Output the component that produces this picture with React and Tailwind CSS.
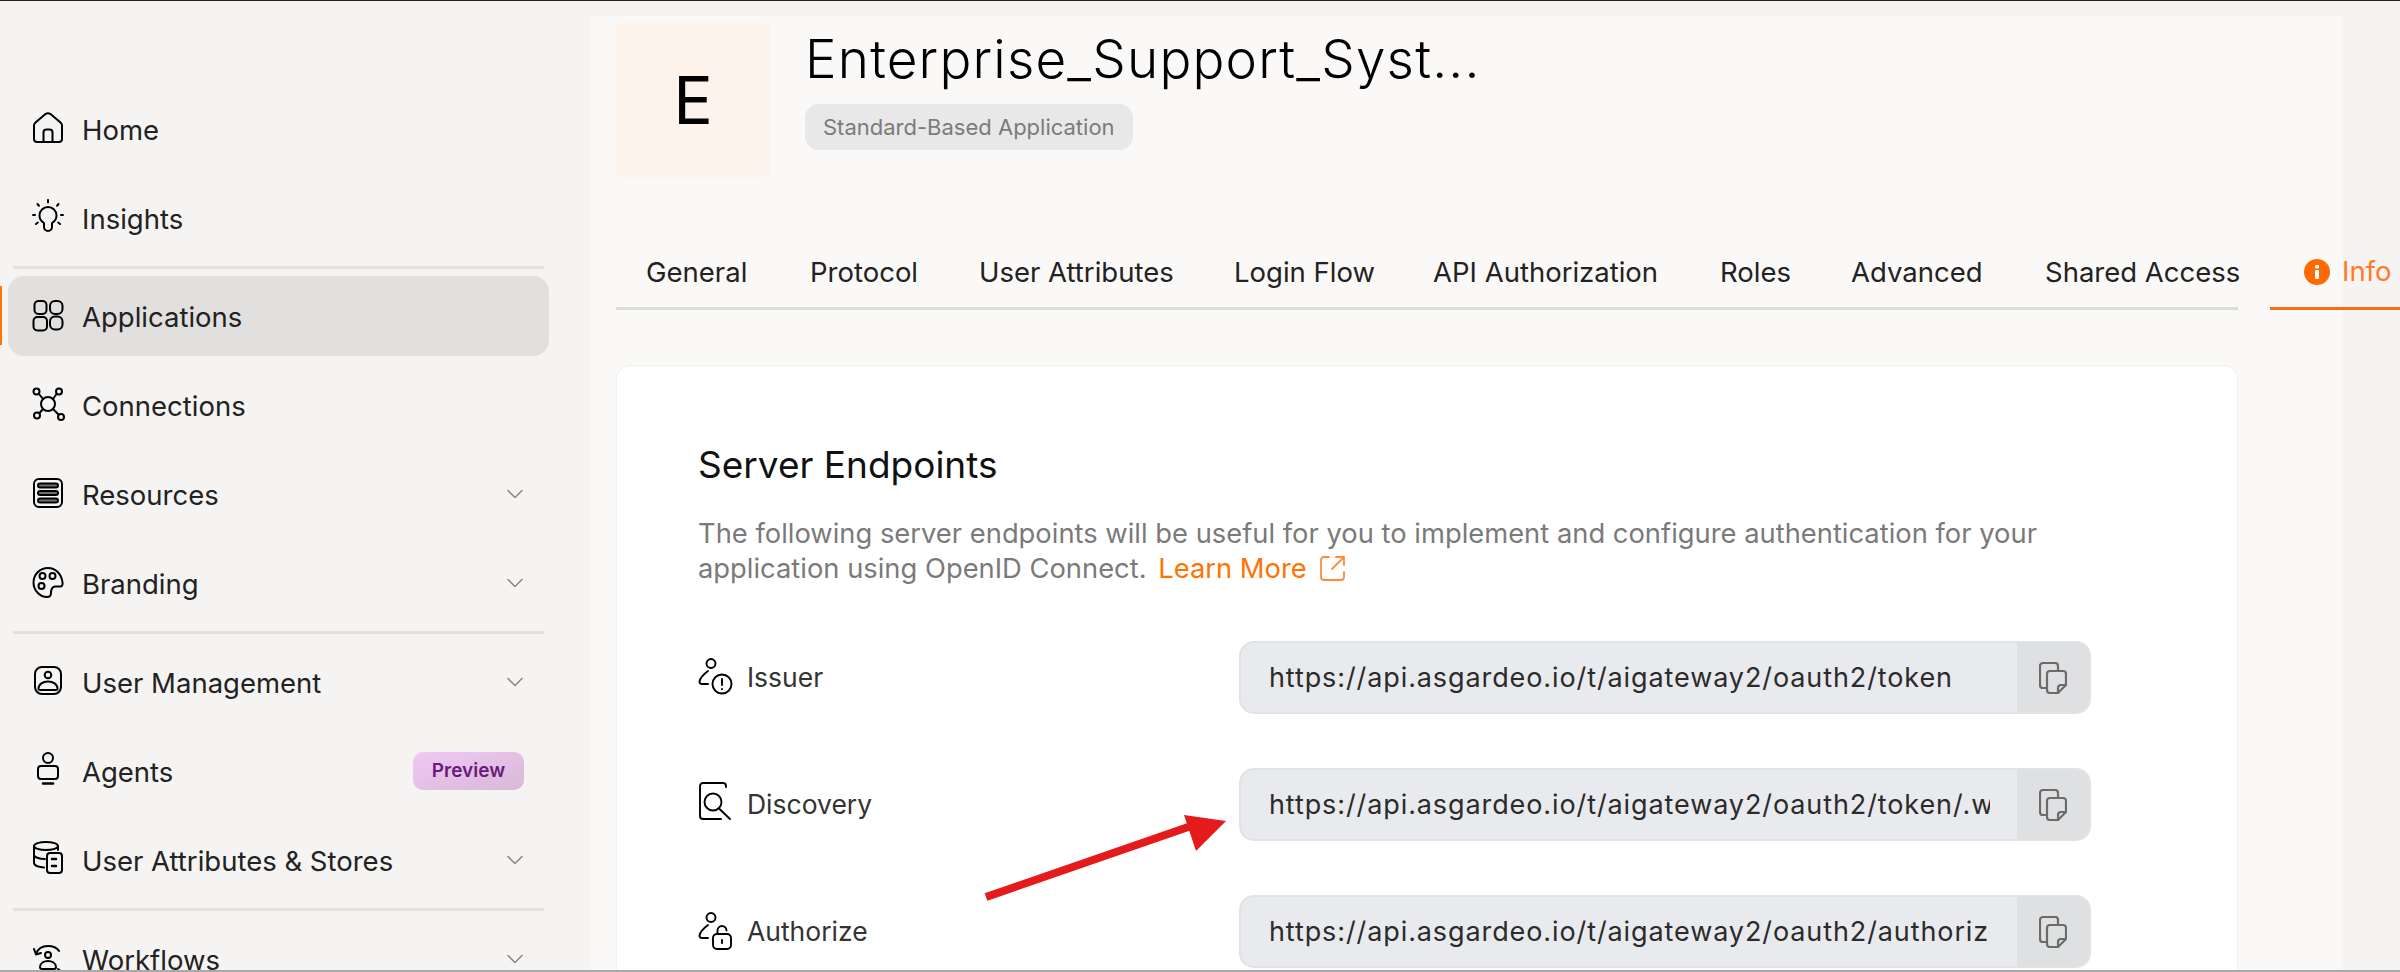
import React from "react";

const S = ({ children, className = "", w = 32, h = 32, sw = 2 }) => (
  <svg width={w} height={h} viewBox={`0 0 ${w} ${h}`} fill="none" stroke="currentColor" strokeWidth={sw} strokeLinecap="round" strokeLinejoin="round" className={`shrink-0 overflow-visible ${className}`}>
    {children}
  </svg>
);

const Home = () => (
  <S>
    <path d="M2 12.5C2 11.3 2.6 10.2 3.5 9.4L13.5 1Q16-.6 18.5 1L28.5 9.4C29.4 10.2 30 11.3 30 12.5V26A3 3 0 0 1 27 29H5A3 3 0 0 1 2 26Z" />
    <path d="M11.5 29V19.5A3 3 0 0 1 14.5 16.5H17.5A3 3 0 0 1 20.5 19.5V29" />
  </S>
);
const Bulb = () => (
  <S>
    <path d="M12 21C9.5 19.5 7.5 16.8 7.5 13.5A8.5 8.5 0 0 1 24.5 13.5C24.5 16.8 22.5 19.5 20 21V25A4 4 0 0 1 12 25Z" />
    <path d="M16-2V.5M5.5 2 7 3.8M26.5 2 25 3.8M1 13H3M29 13H31M4 22 5.8 20.5M28 22 26.2 20.5" />
  </S>
);
const Grid = () => (
  <S>
    <rect x="2.5" y="1" width="12" height="13" rx="4" />
    <rect x="18" y="1" width="12.5" height="13" rx="5" />
    <rect x="1.5" y="17" width="13.5" height="13.5" rx="4" />
    <rect x="18" y="16.5" width="12.5" height="13" rx="5" />
  </S>
);
const Conn = () => (
  <S>
    <circle cx="16" cy="15" r="7" />
    <circle cx="4.5" cy="2.5" r="3" />
    <circle cx="27" cy="2.5" r="3" />
    <circle cx="5" cy="26.5" r="3" />
    <circle cx="29" cy="28" r="3" />
    <path d="M7 5 11 10M24.5 5 21 10M7.5 24 11 20M26.5 25.5 21 20" />
  </S>
);
const Res = () => (
  <S>
    <rect x="2" y="1" width="28" height="28" rx="5" />
    <rect x="6" y="5.5" width="20" height="4" rx="2" fill="currentColor" fillOpacity=".55" />
    <rect x="6" y="13" width="20" height="4" rx="2" fill="currentColor" fillOpacity=".55" />
    <rect x="6" y="20.5" width="20" height="4" rx="2" fill="currentColor" fillOpacity=".55" />
  </S>
);
const Palette = () => (
  <S>
    <path d="M16 1C7.7 1 1.5 7.5 1.5 15.5 1.5 23.5 8 30 15 30 18 30 19 28 19 26 19 23 19.5 20 23 19.5L28 19.5C30 19.5 31 18 30.5 15.5 29.5 7 23.5 1 16 1Z" />
    <circle cx="10.5" cy="9" r="3" />
    <circle cx="20.5" cy="9" r="3" />
    <circle cx="9.5" cy="19" r="3" />
  </S>
);
const UserBox = () => (
  <S>
    <rect x="3" y="1" width="26" height="27" rx="7" />
    <circle cx="16" cy="9" r="3.3" />
    <path d="M6.5 22.5C6.5 18 11 15.5 16 15.5 21 15.5 25.5 18 25.5 22.5 25.5 23.5 24.8 24 24 24H8C7.2 24 6.5 23.5 6.5 22.5Z" />
  </S>
);
const Agent = () => (
  <S>
    <circle cx="16" cy="3" r="5" />
    <rect x="6" y="11" width="20" height="13" rx="3" />
    <path d="M11 28.5H21" strokeWidth="2.5" />
  </S>
);
const Stores = () => (
  <S>
    <ellipse cx="14" cy="2" rx="12" ry="4" />
    <path d="M2 2V19C2 21 6 23 12 23.5M2 11C2 13 7 15 13 15M26 2V6" />
    <rect x="15" y="9" width="15" height="20" rx="3" />
    <path d="M20 15H24M20 22H24" strokeWidth="2.5" />
  </S>
);
const Flow = () => (
  <S>
    <circle cx="16" cy="12" r="3" />
    <path d="M8 24C8 20 12 18 16 18 20 18 24 20 24 24 24 25 23 26 22 26H10C9 26 8 25 8 24Z" />
    <path d="M4 11C6 5 11 3 16 3 21 3 25 5 27 8M2 6 4 11.5 9 10M6 30C10 34 22 34 26 30M26 26 30 29 25 32" />
  </S>
);
const Chevron = () => (
  <svg width="16" height="10" viewBox="0 0 16 10" fill="none" stroke="#8a8a8a" strokeWidth="1.6" strokeLinecap="round" strokeLinejoin="round" className="shrink-0">
    <path d="M1 1.5 8 8.5 15 1.5" />
  </svg>
);

const PersonBase = ({ children }) => (
  <S w={34} h={34} sw={1.9}>
    <circle cx="13" cy="2.5" r="4.5" />
    <path d="M10 10C6 13 2 17 1.5 20.5 1.5 22 2.5 23 4 23H10" />
    {children}
  </S>
);
const Issuer = () => (
  <PersonBase>
    <circle cx="24" cy="23" r="9.5" />
    <path d="M24 18V24M24 28V28.3" />
  </PersonBase>
);
const Lock = () => (
  <PersonBase>
    <rect x="15" y="19" width="18" height="15" rx="4" />
    <path d="M19.5 19V15.5A4.5 4.5 0 0 1 28.5 15.5M24 25V28" />
  </PersonBase>
);
const Disc = () => (
  <S w={34} h={34} sw={1.9}>
    <path d="M28-1V-2A3 3 0 0 0 25-5H5A3 3 0 0 0 2-2V28A3 3 0 0 0 5 31H23" />
    <circle cx="15" cy="14" r="8.5" />
    <path d="M21 20.5 32 31" />
  </S>
);
const Copy = () => (
  <svg width="28" height="32" viewBox="0 0 28 32" fill="none" stroke="#6b6b6b" strokeWidth="2.2" strokeLinejoin="round" strokeLinecap="round" className="shrink-0">
    <path d="M7 26H4A3 3 0 0 1 1 23V4A3 3 0 0 1 4 1H16A3 3 0 0 1 19 4V9" />
    <path d="M11 9H24A3 3 0 0 1 27 12V23L19 31H11A3 3 0 0 1 8 28V12A3 3 0 0 1 11 9Z" />
    <path d="M19 31V26A3 3 0 0 1 22 23H27" />
  </svg>
);

const Row = ({ icon, label, chevron, badge, active }) => (
  <div className={`relative flex h-[80px] items-center rounded-[16px] pl-[24px] pr-[26px] ${active ? "bg-[#e2e0de]" : ""}`}>
    {active && <div className="absolute left-[-8px] top-[10px] h-[59px] w-[2px] bg-[#ff7300]" />}
    {icon}
    <span className="ml-[18px] flex-1 pt-[3px] text-[27.5px] text-[#222]">{label}</span>
    {chevron && <Chevron />}
    {badge && (
      <span className="-mr-[1px] flex h-[38px] w-[111px] items-center justify-center rounded-[10px] bg-gradient-to-br from-[#f0c8f4] to-[#d8b8d6] text-[19px] font-semibold text-[#6a1b7a]">
        Preview
      </span>
    )}
  </div>
);

const Divider = ({ first }) => <div className={`mx-[5px] mt-[-1px] h-[3px] bg-[#e2e1df] ${first ? "mb-[-2px]" : "mb-[-1px]"}`} />;

const tabs = [
  ["General", "w-[164px]"],
  ["Protocol", "w-[169px]"],
  ["User Attributes", "w-[255px]"],
  ["Login Flow", "w-[199px]"],
  ["API Authorization", "w-[287px]"],
  ["Roles", "w-[131px]"],
  ["Advanced", "w-[194px]"],
  ["Shared Access", "w-[223px]"],
];

const Endpoint = ({ icon, label, url }) => (
  <div className="flex h-[73px] items-center">
    <div className="flex w-[541px] shrink-0 items-center">
      {icon}
      <span className="ml-[15px] text-[26.5px] text-[#333]">{label}</span>
    </div>
    <div className="flex h-[73px] w-[852px] shrink-0 overflow-hidden rounded-[15px] border-2 border-[#e0e2e5] bg-[#e8eaed]">
      <div className="ml-[28px] mr-[27px] flex-1 overflow-hidden whitespace-nowrap text-[27px] leading-[69px] tracking-[0.9px] text-[#2b2b2b]">
        {url}
      </div>
      <div className="flex w-[72px] shrink-0 items-center justify-center bg-[#dfe0e2]">
        <Copy />
      </div>
    </div>
  </div>
);

export default function App() {
  return (
    <div className="relative flex h-[972px] w-[2400px] flex-col overflow-hidden bg-[#f5f4f2] font-['Inter',sans-serif]">
      <div className="h-px shrink-0 bg-[#222]" />
      <div className="flex min-h-0 flex-1 overflow-hidden">
        <aside className="w-[590px] shrink-0 pl-[8px] pr-[41px] pt-[88px]">
          <div className="flex flex-col gap-[9px]">
            <Row icon={<Home />} label="Home" />
            <Row icon={<Bulb />} label="Insights" />
            <Divider first />
            <Row icon={<Grid />} label="Applications" active />
            <Row icon={<Conn />} label="Connections" />
            <Row icon={<Res />} label="Resources" chevron />
            <Row icon={<Palette />} label="Branding" chevron />
            <Divider />
            <Row icon={<UserBox />} label="User Management" chevron />
            <Row icon={<Agent />} label="Agents" badge />
            <Row icon={<Stores />} label="User Attributes & Stores" chevron />
            <Divider />
            <Row icon={<Flow />} label="Workflows" chevron />
          </div>
        </aside>
        <main className="mt-[15px] w-[1753px] shrink-0 bg-[#faf9f7] pl-[26px] pt-[7px]">
          <div className="flex h-[154px] gap-[35px]">
            <div className="flex w-[154px] items-center justify-center rounded-[5px] bg-[#fdf3ea] text-[66px] text-black">E</div>
            <div className="pt-[6px]">
              <div className="text-[53px] font-light leading-[60px] tracking-[1.2px] text-black">Enterprise_Support_Syst...</div>
              <div className="mt-[15px] inline-flex h-[46px] items-center rounded-[14px] bg-[#e8e8e8] px-[18px] text-[22px] text-[#7b7b7b]">
                Standard-Based Application
              </div>
            </div>
          </div>
          <div className="mt-[57px] flex w-[1900px]">
            <div className="flex h-[76px] border-b-[3px] border-[#dcdcdb]">
              {tabs.map(([t, w]) => (
                <div key={t} className={`flex items-center whitespace-nowrap pl-[30px] pt-[5px] text-[27.5px] text-[#222] ${w}`}>{t}</div>
              ))}
            </div>
            <div className="ml-[32px] flex h-[76px] w-[130px] items-center border-b-[3px] border-[#ff6a13] pl-[34px] pt-[3px] text-[27.5px] text-[#ff7a2a]">
              <svg width="26" height="26" viewBox="0 0 26 26" className="shrink-0">
                <circle cx="13" cy="13" r="13" fill="#ff6a00" />
                <rect x="11" y="11" width="4" height="9" rx="1" fill="#fff" />
                <rect x="11" y="6" width="4" height="3.5" rx="1" fill="#fff" />
              </svg>
              <span className="ml-[12px]">Info</span>
            </div>
          </div>
          <div className="mt-[55px] min-h-[700px] w-[1622px] rounded-[14px] border border-[#f0f0ee] bg-white pl-[81px] pt-[77px]">
            <h2 className="text-[37px] leading-[44px] text-[#111]">Server Endpoints</h2>
            <p className="mt-[29px] whitespace-nowrap text-[27.35px] leading-[35px] text-[#7a7a7a]">
              The following server endpoints will be useful for you to implement and configure authentication for your
              <br />
              application using OpenID Connect.{" "}
              <span className="ml-[4px] text-[#ff7300]">Learn More</span>
              <svg width="27" height="27" viewBox="0 0 27 27" fill="none" stroke="#ff8a3c" strokeWidth="1.8" strokeLinecap="round" strokeLinejoin="round" className="ml-[12px] inline-block align-[-4px]">
                <path d="M10 2H5A3 3 0 0 0 2 5V22A3 3 0 0 0 5 25H22A3 3 0 0 0 25 22V17" />
                <path d="M13 14 25 2M17 2H25V10" />
              </svg>
            </p>
            <div className="mt-[55px] flex flex-col gap-[54px]">
              <Endpoint icon={<Issuer />} label="Issuer" url="https://api.asgardeo.io/t/aigateway2/oauth2/token" />
              <Endpoint icon={<Disc />} label="Discovery" url="https://api.asgardeo.io/t/aigateway2/oauth2/token/.well-known/openid-configuration" />
              <Endpoint icon={<Lock />} label="Authorize" url="https://api.asgardeo.io/t/aigateway2/oauth2/authorize" />
            </div>
          </div>
        </main>
      </div>
      <div className="h-[2px] shrink-0 bg-[#a9a9a9]" />
      <svg width="260" height="100" viewBox="0 0 260 100" className="absolute left-[980px] top-[805px]">
        <path d="M6 92 214 20" stroke="#e51a1a" strokeWidth="8" fill="none" />
        <path d="M204 10 246 16 216 46Z" fill="#e51a1a" />
      </svg>
    </div>
  );
}
